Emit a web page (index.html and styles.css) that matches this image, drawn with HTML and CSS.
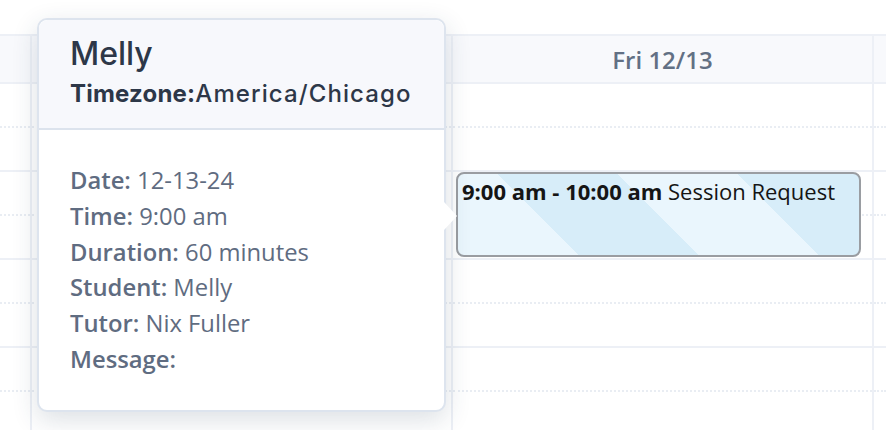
FILE: index.html
```html
<!DOCTYPE html>
<html lang="en">
<head>
<meta charset="UTF-8" />
<title>Week view - session popover</title>
<link rel="stylesheet" href="styles.css">
</head>
<body>
  <div class="calendar">
    <div class="head-row">
      <div class="cell gutter"></div>
      <div class="cell day">Thu 12/12</div>
      <div class="cell day">Fri 12/13</div>
      <div class="cell rest"></div>
    </div>
    <div class="body-row">
      <div class="col gutter">
        <div class="slot"></div><div class="slot"></div><div class="slot"></div><div class="slot"></div>
        <div class="slot"></div><div class="slot"></div><div class="slot"></div><div class="slot"></div>
      </div>
      <div class="col day">
        <div class="slot"></div><div class="slot"></div><div class="slot"></div><div class="slot"></div>
        <div class="slot"></div><div class="slot"></div><div class="slot"></div><div class="slot"></div>
      </div>
      <div class="col day">
        <div class="slot"></div><div class="slot"></div><div class="slot"></div><div class="slot"></div>
        <div class="slot"></div><div class="slot"></div><div class="slot"></div><div class="slot"></div>
        <div class="event">
          <b>9:00 am - 10:00 am</b> Session Request
        </div>
      </div>
      <div class="col rest">
        <div class="slot"></div><div class="slot"></div><div class="slot"></div><div class="slot"></div>
        <div class="slot"></div><div class="slot"></div><div class="slot"></div><div class="slot"></div>
      </div>
    </div>
  </div>

  <!-- popover over the Thursday column -->
  <div class="popover" role="dialog" aria-label="Session details">
    <div class="pop-head">
      <h2 class="pop-title">Melly</h2>
      <div class="pop-tz"><strong>Timezone:</strong>America/Chicago</div>
    </div>
    <div class="pop-body">
      <div><strong>Date:</strong> 12-13-24</div>
      <div><strong>Time:</strong> 9:00 am</div>
      <div><strong>Duration:</strong> 60 minutes</div>
      <div><strong>Student:</strong> Melly</div>
      <div><strong>Tutor:</strong> Nix Fuller</div>
      <div><strong>Message:</strong></div>
    </div>
    <span class="pop-arrow"></span>
  </div>
</body>
</html>
```

FILE: styles.css
```css
* {
  box-sizing: border-box;
}
body {
  margin: 0;
  background: #fff;
  font-family: 'Open Sans', 'Noto Sans', sans-serif;
  overflow: hidden;
}
.calendar {
  padding-top: 34px;
}
.head-row {
  display: flex;
  height: 50px;
  background: #f8f9fc;
  border-top: 2px solid #edf0f6;
  border-bottom: 2px solid #edf0f6;
}
.cell {
  display: flex;
  align-items: center;
  justify-content: center;
  border-right: 2px solid #edf0f6;
  color: #627084;
  font-size: 24px;
  font-weight: 600;
}
.gutter {
  width: 32px;
  flex: none;
}
.day {
  width: 421px;
  flex: none;
}
.rest {
  flex: 1;
  border-right: none;
}
.body-row {
  display: flex;
}
.col {
  position: relative;
  border-right: 2px solid #edf0f6;
}
.col.rest {
  border-right: none;
}
.slot {
  height: 44px;
  border-bottom: 2px dotted #e9edf3;
}
.slot:nth-child(even) {
  border-bottom: 2px solid #edf0f6;
}
.event {
  position: absolute;
  top: 88px;
  left: 3px;
  width: 405px;
  height: 85px;
  border: 2px solid #9a9da2;
  border-radius: 8px;
  padding: 3px 4px;
  color: #151515;
  font-size: 22px;
  line-height: 1.3;
  white-space: nowrap;
  background: repeating-linear-gradient(45deg, #eaf6fd 0 85px, #d7edf9 85px 170px);
}
.event b {
  font-weight: 700;
}
.popover {
  position: absolute;
  left: 37px;
  top: 18px;
  width: 409px;
  height: 394px;
  background: #fff;
  border: 2px solid #dde4ee;
  border-radius: 10px;
  box-shadow: 0 8px 26px rgba(40, 60, 90, 0.16);
}
.pop-head {
  background: #f7f8fc;
  border-bottom: 2px solid #dce3ed;
  border-radius: 9px 9px 0 0;
  padding: 14px 31px 0;
  height: 110px;
}
.pop-title {
  margin: 0;
  font-family: 'Inter', sans-serif;
  font-size: 32px;
  font-weight: 500;
  color: #2d3748;
  line-height: 40px;
}
.pop-tz {
  margin-top: 5px;
  font-family: 'Inter', sans-serif;
  font-size: 24px;
  font-weight: 500;
  letter-spacing: 1.1px;
  color: #2d3748;
  line-height: 30px;
}
.pop-tz strong {
  font-weight: 700;
  letter-spacing: 0.2px;
}
.pop-body {
  padding: 33px 31px 0;
  color: #5f6c81;
  font-size: 23.8px;
  line-height: 35.8px;
}
.pop-body strong {
  font-weight: 600;
}
.pop-arrow {
  position: absolute;
  right: -13px;
  top: 182px;
  width: 0;
  height: 0;
  border-top: 14px solid transparent;
  border-bottom: 14px solid transparent;
  border-left: 13px solid #fff;
}
```
